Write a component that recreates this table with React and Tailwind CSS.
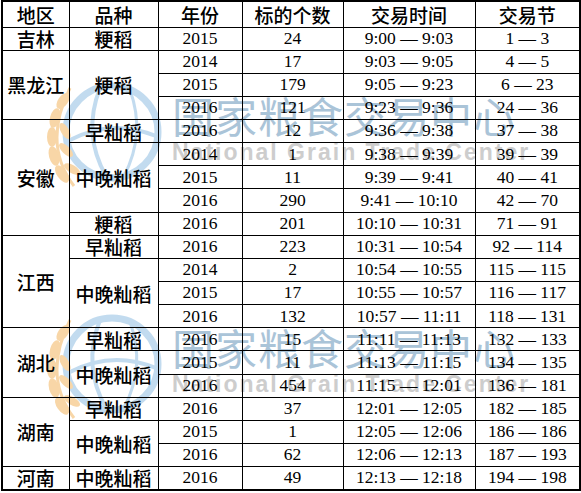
import React from 'react'

const serif = { fontFamily: "'Liberation Serif', 'Noto Sans CJK SC', serif" }

const rows = [
  [{ t: '吉林' }, { t: '粳稻' }, '2015', '24', '9:00 — 9:03', '1 — 3'],
  [{ t: '黑龙江', rs: 3 }, { t: '粳稻', rs: 3 }, '2014', '17', '9:03 — 9:05', '4 — 5'],
  ['2015', '179', '9:05 — 9:23', '6 — 23'],
  ['2016', '121', '9:23 — 9:36', '24 — 36'],
  [{ t: '安徽', rs: 5 }, { t: '早籼稻' }, '2016', '12', '9:36 — 9:38', '37 — 38'],
  [{ t: '中晚籼稻', rs: 3 }, '2014', '1', '9:38 — 9:39', '39 — 39'],
  ['2015', '11', '9:39 — 9:41', '40 — 41'],
  ['2016', '290', '9:41 — 10:10', '42 — 70'],
  [{ t: '粳稻' }, '2016', '201', '10:10 — 10:31', '71 — 91'],
  [{ t: '江西', rs: 4 }, { t: '早籼稻' }, '2016', '223', '10:31 — 10:54', '92 — 114'],
  [{ t: '中晚籼稻', rs: 3 }, '2014', '2', '10:54 — 10:55', '115 — 115'],
  ['2015', '17', '10:55 — 10:57', '116 — 117'],
  ['2016', '132', '10:57 — 11:11', '118 — 131'],
  [{ t: '湖北', rs: 3 }, { t: '早籼稻' }, '2016', '15', '11:11 — 11:13', '132 — 133'],
  [{ t: '中晚籼稻', rs: 2 }, '2015', '11', '11:13 — 11:15', '134 — 135'],
  ['2016', '454', '11:15 — 12:01', '136 — 181'],
  [{ t: '湖南', rs: 3 }, { t: '早籼稻' }, '2016', '37', '12:01 — 12:05', '182 — 185'],
  [{ t: '中晚籼稻', rs: 2 }, '2015', '1', '12:05 — 12:06', '186 — 186'],
  ['2016', '62', '12:06 — 12:13', '187 — 193'],
  [{ t: '河南' }, { t: '中晚籼稻' }, '2016', '49', '12:13 — 12:18', '194 — 198'],
]

const headers = ['地区', '品种', '年份', '标的个数', '交易时间', '交易节']

function Logo() {
  return (
    <svg width="130" height="120" viewBox="0 0 130 120">
      <g fill="none" stroke="#b3d3ec" strokeLinecap="round">
        <circle cx="80" cy="58" r="46" strokeWidth="7" />
        <path d="M38 66 Q80 44 124 62" strokeWidth="4" />
        <path d="M68 14 Q50 60 74 102" strokeWidth="4" />
        <path d="M98 16 Q114 60 92 102" strokeWidth="3" />
      </g>
      <g fill="#f7cd92">
        <ellipse cx="30" cy="100" rx="5" ry="10" transform="rotate(-35 30 100)" />
        <ellipse cx="22" cy="82" rx="5" ry="10" transform="rotate(-15 22 82)" />
        <ellipse cx="20" cy="63" rx="5" ry="10" transform="rotate(0 20 63)" />
        <ellipse cx="23" cy="44" rx="5" ry="10" transform="rotate(15 23 44)" />
        <ellipse cx="31" cy="27" rx="5" ry="9" transform="rotate(35 31 27)" />
        <ellipse cx="40" cy="95" rx="4" ry="9" transform="rotate(-60 40 95)" />
        <ellipse cx="34" cy="76" rx="4" ry="9" transform="rotate(-45 34 76)" />
        <ellipse cx="33" cy="57" rx="4" ry="9" transform="rotate(-30 33 57)" />
      </g>
      <path d="M42 112 Q10 70 38 14" fill="none" stroke="#f7cd92" strokeWidth="3" />
    </svg>
  )
}

function Watermark({ top }) {
  return (
    <div className="absolute left-[32px] flex items-start" style={{ top }}>
      <div className="opacity-80">
        <Logo />
      </div>
      <div className="ml-[10px] mt-[18px] flex flex-col">
        <div
          className="text-[42px] leading-[46px] tracking-[1px] text-[#aac4d8]"
          style={{ fontFamily: "'Noto Sans CJK SC', sans-serif" }}
        >
          国家粮食交易中心
        </div>
        <div
          className="mt-[2px] text-[23px] leading-[24px] tracking-[2px] font-bold text-[#cdcdcd]"
          style={{ fontFamily: "'Liberation Sans', Arial, sans-serif" }}
        >
          National Grain Trade Center
        </div>
      </div>
    </div>
  )
}

function Cell({ c }) {
  if (typeof c === 'string') {
    return <td className="border border-black p-0 text-center align-middle text-[17.5px] leading-none whitespace-nowrap">{c}</td>
  }
  return (
    <td
      rowSpan={c.rs || 1}
      className="border border-black p-0 text-center align-middle text-[19px] leading-none font-medium whitespace-nowrap"
      style={{ fontFamily: "'Noto Sans CJK SC', sans-serif" }}
    >
      {c.t}
    </td>
  )
}

export default function App() {
  return (
    <div className="relative w-[581px] h-[493px] bg-white overflow-hidden">
      <Watermark top={74} />
      <Watermark top={306} />
      <table
        className="relative z-10 ml-px w-[578px] table-fixed border-collapse border-2 border-black text-black"
        style={serif}
      >
        <colgroup>
          <col className="w-[67px]" />
          <col className="w-[89px]" />
          <col className="w-[84px]" />
          <col className="w-[101px]" />
          <col className="w-[132px]" />
          <col className="w-[105px]" />
        </colgroup>
        <thead>
          <tr className="h-[26px]">
            {headers.map((h) => (
              <th
                key={h}
                className="border border-black p-0 text-center align-middle text-[19px] leading-none font-medium"
                style={{ fontFamily: "'Noto Sans CJK SC', sans-serif" }}
              >
                {h}
              </th>
            ))}
          </tr>
        </thead>
        <tbody>
          {rows.map((r, i) => (
            <tr key={i} className="h-[23.15px]">
              {r.map((c, j) => (
                <Cell key={j} c={c} />
              ))}
            </tr>
          ))}
        </tbody>
      </table>
    </div>
  )
}
